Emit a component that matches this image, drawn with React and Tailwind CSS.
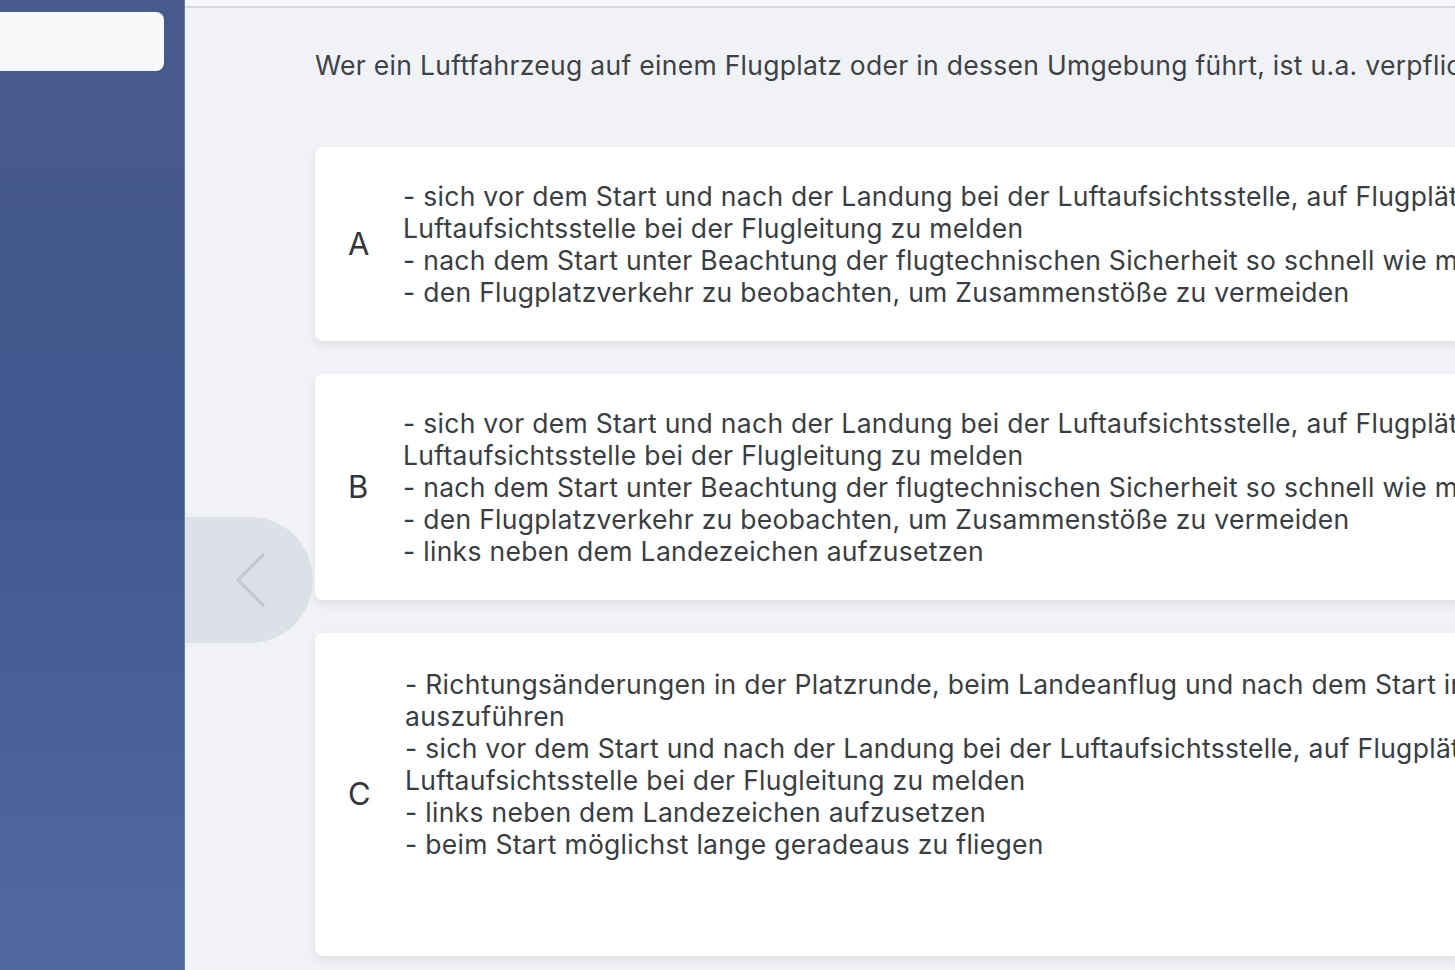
import React from "react";

const answers = [
  {
    letter: "A",
    lines: [
      "- sich vor dem Start und nach der Landung bei der Luftaufsichtsstelle, auf Flugplätzen ohne",
      "Luftaufsichtsstelle bei der Flugleitung zu melden",
      "- nach dem Start unter Beachtung der flugtechnischen Sicherheit so schnell wie möglich",
      "- den Flugplatzverkehr zu beobachten, um Zusammenstöße zu vermeiden",
    ],
  },
  {
    letter: "B",
    lines: [
      "- sich vor dem Start und nach der Landung bei der Luftaufsichtsstelle, auf Flugplätzen ohne",
      "Luftaufsichtsstelle bei der Flugleitung zu melden",
      "- nach dem Start unter Beachtung der flugtechnischen Sicherheit so schnell wie möglich",
      "- den Flugplatzverkehr zu beobachten, um Zusammenstöße zu vermeiden",
      "- links neben dem Landezeichen aufzusetzen",
    ],
  },
  {
    letter: "C",
    tall: true,
    lines: [
      "- Richtungsänderungen in der Platzrunde, beim Landeanflug und nach dem Start in",
      "auszuführen",
      "- sich vor dem Start und nach der Landung bei der Luftaufsichtsstelle, auf Flugplätzen ohne",
      "Luftaufsichtsstelle bei der Flugleitung zu melden",
      "- links neben dem Landezeichen aufzusetzen",
      "- beim Start möglichst lange geradeaus zu fliegen",
    ],
  },
];

function AnswerCard({ answer }) {
  return (
    <div
      className={
        answer.tall
          ? "flex w-[1300px] shrink-0 items-center rounded-lg bg-white h-[323px] shadow-[0_4px_10px_rgba(0,0,0,0.08)]"
          : "flex w-[1300px] shrink-0 items-center rounded-lg bg-white shadow-[0_4px_10px_rgba(0,0,0,0.08)]"
      }
    >
      <div className="w-[88px] shrink-0 pl-[33px] text-[31px] text-[#333538]">
        {answer.letter}
      </div>
      <div
        className={
          answer.tall
            ? "self-start ml-[2px] pt-[35px] text-[26.5px] leading-[32px] tracking-[0.011em] text-[#3a3d41]"
            : "py-[33px] text-[26.5px] leading-[32px] tracking-[0.011em] text-[#3a3d41]"
        }
      >
        {answer.lines.map((line, i) => (
          <div key={i} className="whitespace-nowrap">
            {line}
          </div>
        ))}
      </div>
    </div>
  );
}

export default function App() {
  return (
    <div
      className="flex h-[970px] w-[1455px] overflow-hidden bg-[#f1f2f5]"
      style={{ fontFamily: "Inter, 'Noto Sans', sans-serif" }}
    >
      {/* sidebar */}
      <div className="w-[185px] shrink-0 bg-gradient-to-b from-[#465a8c] via-[#43588f] to-[#5169a1] border-r border-[#6b7fae] pt-[12px]">
        <div className="ml-[-12px] mr-[20px] h-[59px] rounded-lg bg-[#f8f9fb]" />
      </div>

      {/* main */}
      <div className="relative flex-1 overflow-hidden">
        <div className="h-[8px] border-b-2 border-[#d6d9de] bg-[#f7f8fa]" />
        <div className="pl-[130px] pt-[41px]">
          <div className="whitespace-nowrap text-[26.5px] leading-[32px] tracking-[0.011em] text-[#3e4145]">
            Wer ein Luftfahrzeug auf einem Flugplatz oder in dessen Umgebung führt, ist u.a. verpflichtet,
          </div>
          <div className="mt-[66px] flex flex-col gap-[33px]">
            {answers.map((a) => (
              <AnswerCard key={a.letter} answer={a} />
            ))}
          </div>
        </div>

        {/* back button */}
        <button className="absolute left-0 top-[517px] flex h-[126px] w-[128px] items-center justify-center rounded-r-full bg-[#dde0e6]">
          <svg width="40" height="60" viewBox="0 0 40 60">
            <path
              d="M34 5 L9 30 L34 55"
              fill="none"
              stroke="#c5c9d0"
              strokeWidth="3.5"
              strokeLinecap="round"
              strokeLinejoin="round"
            />
          </svg>
        </button>
      </div>
    </div>
  );
}
